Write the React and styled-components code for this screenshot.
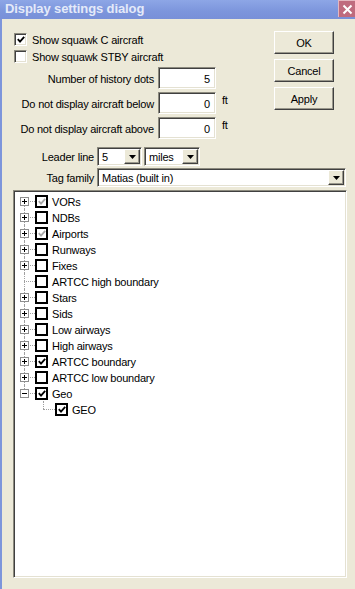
import React from 'react';
import styled, { createGlobalStyle } from 'styled-components';

const GlobalStyle = createGlobalStyle`
  html, body {
    margin: 0;
    padding: 0;
    background: #ECE9D8;
  }
  * {
    box-sizing: border-box;
  }
`;

const Window = styled.div`
  width: 355px;
  height: 589px;
  display: flex;
  flex-direction: column;
  font-family: "Liberation Sans", Arial, sans-serif;
  font-size: 11px;
  letter-spacing: -0.2px;
  color: #000;
  overflow: hidden;
`;

const TitleBar = styled.div`
  height: 19px;
  flex-shrink: 0;
  display: flex;
  align-items: flex-start;
  justify-content: space-between;
  background: linear-gradient(180deg, #8DA6E6 0%, #7C95DC 60%, #7890D8 100%);
`;

const Title = styled.div`
  padding: 1px 0 0 5px;
  font-size: 13px;
  font-weight: bold;
  letter-spacing: -0.1px;
  color: #E4EAF9;
  line-height: 16px;
`;

const CloseButton = styled.div`
  width: 17px;
  height: 17px;
  margin-top: 0;
  display: flex;
  align-items: center;
  justify-content: center;
  background: #BF6B7E;
  border-top: 1px solid #E3B7C0;
  border-left: 1px solid #E3B7C0;
`;

const Body = styled.div`
  flex: 1;
  display: flex;
  flex-direction: column;
  border-left: 2px solid #7D95DB;
  padding: 12px 8px 11px 11px;
  min-height: 0;
`;

const TopSection = styled.div`
  display: flex;
  justify-content: space-between;
`;

const LeftCol = styled.div`
  display: flex;
  flex-direction: column;
`;

const CheckRow = styled.label`
  height: 17px;
  display: flex;
  align-items: center;
  gap: 5px;
  padding-left: 1px;
`;

const ClassicCheck = styled.span`
  width: 13px;
  height: 13px;
  display: flex;
  align-items: center;
  justify-content: center;
  background: #fff;
  border-top: 1px solid #8C8A7E;
  border-left: 1px solid #8C8A7E;
  border-bottom: 1px solid #fff;
  border-right: 1px solid #fff;
  box-shadow: inset 1px 1px 0 #404040, inset -1px -1px 0 #E4E1D2;
`;

const FieldGrid = styled.div`
  margin-top: 2px;
  display: grid;
  grid-template-columns: 141px 58px auto;
  grid-auto-rows: 22px;
  column-gap: 4px;
  row-gap: 3px;
`;

const FieldLabel = styled.div`
  align-self: center;
  text-align: right;
  white-space: nowrap;
  padding-top: 2px;
`;

const NumBox = styled.div`
  display: flex;
  align-items: center;
  justify-content: flex-end;
  padding: 2px 5px 0 0;
  background: #fff;
  border-top: 1px solid #8C8A7E;
  border-left: 1px solid #8C8A7E;
  border-bottom: 1px solid #fff;
  border-right: 1px solid #fff;
  box-shadow: inset 1px 1px 0 #404040, inset -1px -1px 0 #E4E1D2;
`;

const Unit = styled.div`
  padding: 2px 0 0 2px;
  line-height: 12px;
`;

const ButtonCol = styled.div`
  display: flex;
  flex-direction: column;
  gap: 5px;
  margin-right: 13px;
`;

const Button = styled.div`
  width: 60px;
  height: 23px;
  display: flex;
  align-items: center;
  justify-content: center;
  background: #ECE9D8;
  border-top: 1px solid #fff;
  border-left: 1px solid #fff;
  border-bottom: 1px solid #404040;
  border-right: 1px solid #404040;
  box-shadow: inset -1px -1px 0 #9A988C;
`;

const ComboGrid = styled.div`
  margin-top: 8px;
  display: grid;
  grid-template-columns: 81px auto;
  grid-auto-rows: 19px;
  column-gap: 3px;
  row-gap: 2px;
`;

const ComboLabel = styled.div`
  align-self: center;
  text-align: right;
  white-space: nowrap;
`;

const ComboGroup = styled.div`
  display: flex;
  gap: 2px;
`;

const Combo = styled.div`
  width: ${(p) => p.$w}px;
  height: ${(p) => p.$h || 19}px;
  display: flex;
  align-items: stretch;
  background: #fff;
  border-top: 1px solid #8C8A7E;
  border-left: 1px solid #8C8A7E;
  border-bottom: 1px solid #fff;
  border-right: 1px solid #fff;
  box-shadow: inset 1px 1px 0 #404040, inset -1px -1px 0 #E4E1D2;
  padding: 1px;
`;

const ComboText = styled.div`
  flex: 1;
  display: flex;
  align-items: center;
  padding: 1px 0 0 3px;
  white-space: nowrap;
  overflow: hidden;
`;

const DropButton = styled.div`
  width: 16px;
  display: flex;
  align-items: center;
  justify-content: center;
  background: #ECE9D8;
  border-top: 1px solid #fff;
  border-left: 1px solid #fff;
  border-bottom: 1px solid #404040;
  border-right: 1px solid #404040;
  box-shadow: inset -1px -1px 0 #9A988C;
`;

const Tree = styled.div`
  margin-top: 3px;
  flex: 1;
  background: #fff;
  border-top: 1px solid #8C8A7E;
  border-left: 1px solid #8C8A7E;
  border-bottom: 1px solid #fff;
  border-right: 1px solid #fff;
  box-shadow: inset 1px 1px 0 #404040, inset -1px -1px 0 #E4E1D2;
  padding: 2px 1px 1px 1px;
  display: flex;
  flex-direction: column;
`;

const TreeRow = styled.div`
  height: 16px;
  display: flex;
  align-items: center;
`;

const Gutter = styled.div`
  position: relative;
  width: 20px;
  height: 16px;
  flex-shrink: 0;
  display: flex;
  align-items: center;
  padding-left: 5px;

  /* vertical tree line */
  &::before {
    content: '';
    display: ${(p) => (p.$v ? 'block' : 'none')};
    position: absolute;
    left: ${(p) => p.$x}px;
    top: ${(p) => (p.$v === 'bottom' ? 8 : 0)}px;
    height: ${(p) => (p.$v === 'full' ? 16 : 8)}px;
    border-left: 1px dotted #A0A0A0;
  }

  /* horizontal tree line */
  &::after {
    content: '';
    display: ${(p) => (p.$h ? 'block' : 'none')};
    position: absolute;
    left: ${(p) => p.$x}px;
    right: 0;
    top: 8px;
    border-top: 1px dotted #A0A0A0;
  }
`;

const Expander = styled.svg`
  position: relative;
  z-index: 1;
  display: block;
`;

const TreeCheck = styled.span`
  width: 13px;
  height: 13px;
  flex-shrink: 0;
  display: flex;
  align-items: center;
  justify-content: center;
  background: #fff;
  border: 2px solid #000;
`;

const TreeLabel = styled.span`
  margin-left: 4px;
  white-space: nowrap;
  padding-top: 1px;
`;

const CheckMark = ({ color = '#000' }) => (
  <svg width="8" height="7" viewBox="0 0 8 7">
    <path d="M0.8 3.2 L3 5.6 L7.2 0.8" fill="none" stroke={color} strokeWidth="1.8" />
  </svg>
);

const ExpanderBox = ({ open }) => (
  <Expander width="9" height="9" viewBox="0 0 9 9">
    <rect x="0.5" y="0.5" width="8" height="8" fill="#fff" stroke="#8E8E8E" />
    <path d="M2 4.5 H7" stroke="#000" strokeWidth="1" />
    {!open && <path d="M4.5 2 V7" stroke="#000" strokeWidth="1" />}
  </Expander>
);

const DownArrow = () => (
  <svg width="7" height="4" viewBox="0 0 7 4">
    <path d="M0 0 H7 L3.5 4 Z" fill="#000" />
  </svg>
);

const items = [
  { label: 'VORs', state: 'gray', expand: 'plus' },
  { label: 'NDBs', state: 'off', expand: 'plus' },
  { label: 'Airports', state: 'gray', expand: 'plus' },
  { label: 'Runways', state: 'off', expand: 'plus' },
  { label: 'Fixes', state: 'off', expand: 'plus' },
  { label: 'ARTCC high boundary', state: 'off', expand: null },
  { label: 'Stars', state: 'off', expand: 'plus' },
  { label: 'Sids', state: 'off', expand: 'plus' },
  { label: 'Low airways', state: 'off', expand: 'plus' },
  { label: 'High airways', state: 'off', expand: 'plus' },
  { label: 'ARTCC boundary', state: 'on', expand: 'plus' },
  { label: 'ARTCC low boundary', state: 'off', expand: 'plus' },
  { label: 'Geo', state: 'on', expand: 'minus' },
];

const renderCheck = (state) => (
  <TreeCheck>
    {state === 'on' && <CheckMark />}
    {state === 'gray' && <CheckMark color="#A8A8A8" />}
  </TreeCheck>
);

const fields = [
  { label: 'Number of history dots', value: '5', unit: '' },
  { label: 'Do not display aircraft below', value: '0', unit: 'ft' },
  { label: 'Do not display aircraft above', value: '0', unit: 'ft' },
];

export default function App() {
  return (
    <Window>
      <GlobalStyle />
      <TitleBar>
        <Title>Display settings dialog</Title>
        <CloseButton>
          <svg width="11" height="11" viewBox="0 0 11 11">
            <path d="M1.5 1.5 L9.5 9.5 M9.5 1.5 L1.5 9.5" stroke="#fff" strokeWidth="2" />
          </svg>
        </CloseButton>
      </TitleBar>
      <Body>
        <TopSection>
          <LeftCol>
            <CheckRow>
              <ClassicCheck><CheckMark /></ClassicCheck>
              <span>Show squawk C aircraft</span>
            </CheckRow>
            <CheckRow>
              <ClassicCheck />
              <span>Show squawk STBY aircraft</span>
            </CheckRow>
            <FieldGrid>
              {fields.map((f) => (
                <React.Fragment key={f.label}>
                  <FieldLabel>{f.label}</FieldLabel>
                  <NumBox>{f.value}</NumBox>
                  <Unit>{f.unit}</Unit>
                </React.Fragment>
              ))}
            </FieldGrid>
          </LeftCol>
          <ButtonCol>
            <Button>OK</Button>
            <Button>Cancel</Button>
            <Button>Apply</Button>
          </ButtonCol>
        </TopSection>

        <ComboGrid>
          <ComboLabel>Leader line</ComboLabel>
          <ComboGroup>
            <Combo $w={45}>
              <ComboText>5</ComboText>
              <DropButton><DownArrow /></DropButton>
            </Combo>
            <Combo $w={56}>
              <ComboText>miles</ComboText>
              <DropButton><DownArrow /></DropButton>
            </Combo>
          </ComboGroup>
          <ComboLabel>Tag family</ComboLabel>
          <Combo $w={249}>
            <ComboText>Matias (built in)</ComboText>
            <DropButton><DownArrow /></DropButton>
          </Combo>
        </ComboGrid>

        <Tree>
          {items.map((it, i) => {
            const v = i === 0 ? 'bottom' : i === items.length - 1 ? 'top' : 'full';
            return (
              <TreeRow key={it.label}>
                <Gutter $v={v} $h $x={9}>
                  {it.expand && <ExpanderBox open={it.expand === 'minus'} />}
                </Gutter>
                {renderCheck(it.state)}
                <TreeLabel>{it.label}</TreeLabel>
              </TreeRow>
            );
          })}
          <TreeRow>
            <Gutter />
            <Gutter $v="top" $h $x={8} />
            {renderCheck('on')}
            <TreeLabel>GEO</TreeLabel>
          </TreeRow>
        </Tree>
      </Body>
    </Window>
  );
}
